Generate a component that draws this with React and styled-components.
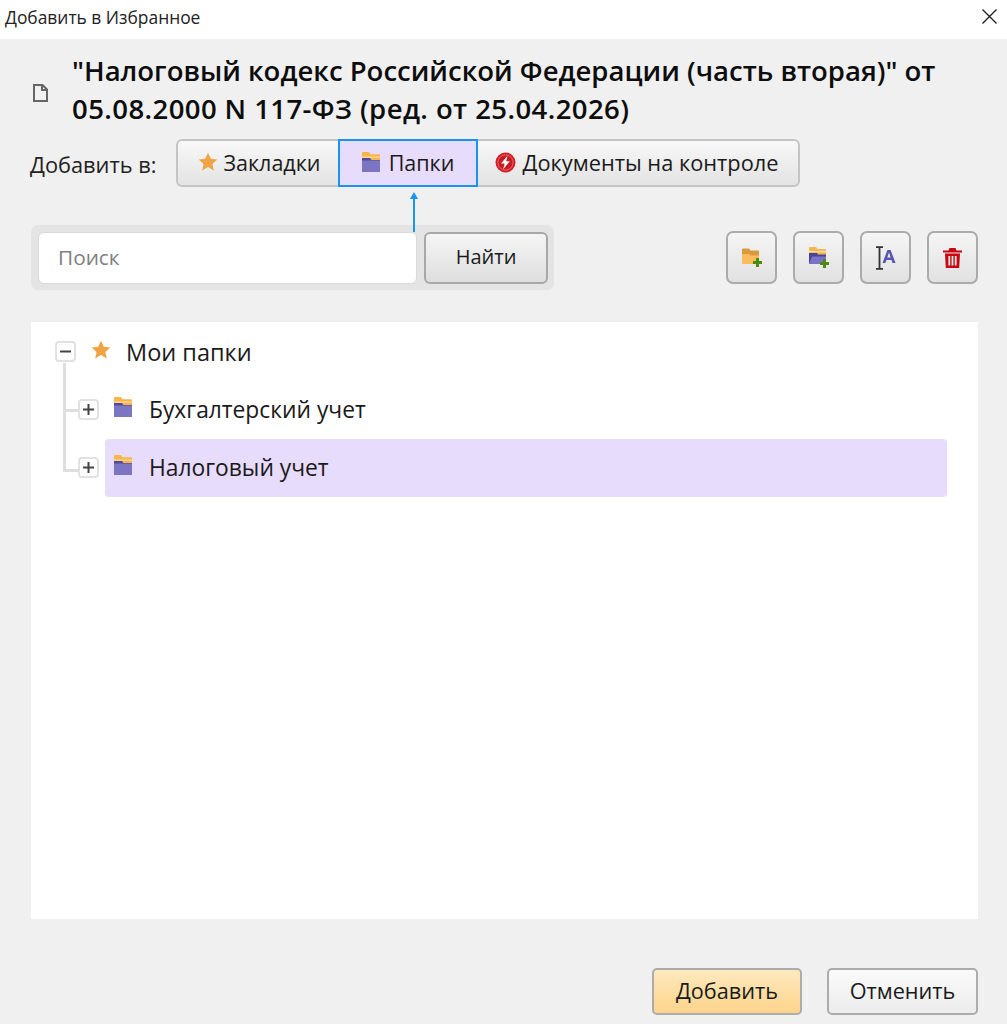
import React from 'react';
import styled, { createGlobalStyle } from 'styled-components';

const Global = createGlobalStyle`
  html, body { margin: 0; padding: 0; background: #f0f0f0; }
  body { font-family: "Open Sans", "Noto Sans", "Liberation Sans", sans-serif; color: #111; }
  * { box-sizing: border-box; }
`;

const Dialog = styled.div`
  width: 1007px; height: 1024px; background: #f0f0f0; display: flex; flex-direction: column; overflow: hidden;
`;
const TitleBar = styled.header`
  height: 39px; flex: none; background: #fff; display: flex; align-items: center; justify-content: space-between;
  padding: 0 10px 6px 5px; font-size: 17.4px; color: #222;
`;
const Close = styled.button`
  border: 0; padding: 0; background: none; width: 15px; height: 15px; display: flex;
`;
const Body = styled.main`
  flex: 1; display: flex; flex-direction: column; padding: 13px 29px 9px 31px; min-height: 0;
`;
const DocHead = styled.div`
  display: flex; align-items: center; gap: 24px; padding-left: 2px;
`;
const DocTitle = styled.h1`
  margin: 0; font-size: 27.5px; line-height: 38px; font-weight: 600; color: #0d0d0d; width: 890px;
`;
const TitleLine = styled.span`
  display: block; white-space: nowrap; letter-spacing: ${p => p.$spacing || 0}px;
`;
const TabRow = styled.div`
  display: flex; align-items: center; gap: 18px; margin-top: 11px; position: relative; height: 48px;
`;
const Label = styled.span`
  font-size: 21.8px; width: 127px; margin-left: -1px; flex: none; color: #222; white-space: nowrap; margin-top: 2px;
`;
const Tabs = styled.div`
  display: flex; height: 48px; margin-left: 1px; border: 2px solid #c4c4c4; border-radius: 6px;
  background: linear-gradient(#f8f8f8, #e3e3e3); overflow: visible;
`;
const Tab = styled.div`
  display: flex; align-items: center; justify-content: center; gap: ${p => p.$gap || 8}px;
  width: ${p => p.$w}px; font-size: ${p => p.$size || 21.5}px; color: #1a1a1a; white-space: nowrap; padding-bottom: 2px;
  ${p => p.$active && `
    background: #e8dcfd; outline: 2px solid #1a94ea; outline-offset: 0; position: relative;
  `}
`;
const Arrow = styled.svg`
  position: absolute; left: 379px; top: 53px; width: 8px; height: 40px; z-index: 2;
`;
const ToolRow = styled.div`
  display: flex; justify-content: space-between; align-items: center; margin-top: 38px; height: 66px;
`;
const SearchGroup = styled.div`
  display: flex; gap: 7px; width: 523px; height: 65px; padding: 7px 6px 6px 7px; background: #e4e4e4; border-radius: 7px;
`;
const SearchInput = styled.input`
  flex: 1; min-width: 0; height: 52px; border: 1px solid #dadada; border-radius: 6px; background: #fff;
  padding: 0 19px 3px; font: inherit; font-size: 20.8px; outline: none;
  &::placeholder { color: #808080; opacity: 1; }
`;
const SearchBtn = styled.button`
  width: 124px; height: 52px; padding: 0 0 3px; border: 2px solid #a8a8a8; border-radius: 6px;
  background: linear-gradient(#f5f5f5, #dedede); font: inherit; font-size: 20px; color: #1a1a1a;
`;
const IconGroup = styled.div`
  display: flex; gap: 16px;
`;
const IconBtn = styled.button`
  width: 51px; height: 53px; padding: 0; border: 2px solid #ababab; border-radius: 7px;
  background: linear-gradient(#f5f5f5, #e1e1e1); display: flex; align-items: center; justify-content: center;
`;
const TreePanel = styled.section`
  margin-top: 31px; height: 598px; background: #fff; padding: 7px 31px 0 24px;
`;
const RootRow = styled.div`
  display: flex; align-items: center; height: 46px; font-size: 23.5px; color: #1a1a1a;
`;
const Toggle = styled.span`
  width: 21px; height: 21px; flex: none; border: 2px solid #e1e1e1; border-radius: 4px; background: #fff;
  display: flex; align-items: center; justify-content: center; position: relative; z-index: 1;
`;
const RootStar = styled.span`
  display: flex; margin: -3px 15px 0 15px;
`;
const Children = styled.div`
  position: relative; padding-left: 23px; margin-top: 6px;
  &::before {
    content: ""; position: absolute; left: 8px; top: -18px; width: 16px; height: 106px;
    border-left: 3px solid #dedede; border-bottom: 3px solid #dedede;
  }
`;
const ChildRow = styled.div`
  position: relative; display: flex; align-items: center; height: 58px;
  &::before {
    content: ""; position: absolute; left: -15px; top: 28px; width: 16px; height: 3px; background: #dedede;
    display: ${p => (p.$last ? 'none' : 'block')};
  }
`;
const ChildLabel = styled.div`
  flex: 1; height: 58px; margin-left: 6px; padding-left: 9px; display: flex; align-items: center; gap: 17px;
  font-size: 22.8px; border-radius: 4px; color: #1a1a1a;
  background: ${p => (p.$selected ? '#e8dcfd' : 'transparent')};
`;
const FolderWrap = styled.span`
  display: flex; margin-top: -5px;
`;
const Footer = styled.footer`
  margin-top: 49px; display: flex; justify-content: flex-end; gap: 25px;
`;
const FootBtn = styled.button`
  width: ${p => p.$w}px; height: 47px; padding: 0 0 2px; border: 2px solid #acacac; border-radius: 5px; font: inherit; font-size: 21.7px; color: #1a1a1a;
  background: ${p => (p.$primary ? 'linear-gradient(#fee9bf, #fdd48b)' : 'linear-gradient(#fafafa, #ececec)')};
`;

const Star = ({ s = 20 }) => (
  <svg width={s} height={s} viewBox="0 0 20 20"><path d="M10 .8l2.8 6 6.5.7-4.9 4.4 1.4 6.5L10 15.1l-5.8 3.3 1.4-6.5L.7 7.5l6.5-.7z" fill="#f0a343" /></svg>
);
const Folder = ({ w = 18, h = 20 }) => (
  <svg width={w} height={h} viewBox="0 0 18 20">
    <path d="M0 1A1 1 0 0 1 1 0h6l1.5 2.2H17a1 1 0 0 1 1 1V9H0z" fill="#f9b54c" />
    <rect y="4.6" width="18" height="1" fill="#fde3ae" />
    <path d="M0 6h8l1.5 2H18v11a1 1 0 0 1-1 1H1a1 1 0 0 1-1-1z" fill="#4f4a9c" />
    <path d="M0 8.4h18V19a1 1 0 0 1-1 1H1a1 1 0 0 1-1-1z" fill="#7b75c2" />
  </svg>
);
const Plus = ({ minus }) => (
  <svg width="11" height="11" viewBox="0 0 11 11">
    <rect x="0" y="4.5" width="11" height="2" fill="#444" />
    {!minus && <rect x="4.5" y="0" width="2" height="11" fill="#444" />}
  </svg>
);
const GreenPlus = () => (
  <path d="M14 10h3v3h3v3h-3v3h-3v-3h-3v-3h3z" fill="#4f8a10" />
);
const CloseIcon = () => (
  <svg width="15" height="15" viewBox="0 0 15 15"><path d="M.5.5l14 14M14.5.5l-14 14" stroke="#222" strokeWidth="1.4" fill="none" /></svg>
);

export default function App() {
  return (
    <Dialog>
      <Global />
      <TitleBar>
        <span>Добавить в Избранное</span>
        <Close aria-label="Закрыть"><CloseIcon /></Close>
      </TitleBar>
      <Body>
        <DocHead>
          <svg width="15" height="18" viewBox="0 0 15 18" style={{ flex: 'none', marginTop: 6 }}>
            <path d="M1 1h8.5L14 5.5V17H1z M9 1v5h5" fill="none" stroke="#666" strokeWidth="2" />
          </svg>
          <DocTitle>
            <TitleLine>"Налоговый кодекс Российской Федерации (часть вторая)" от</TitleLine>
            <TitleLine $spacing={0.42}>05.08.2000 N 117-ФЗ (ред. от 25.04.2026)</TitleLine>
          </DocTitle>
        </DocHead>
        <TabRow>
          <Label>Добавить в:</Label>
          <Tabs>
            <Tab $w={162} $gap={6}><Star />Закладки</Tab>
            <Tab $w={136} $active $gap={9}><Folder />Папки</Tab>
            <Tab $w={322} $gap={6} $size={21.8}>
              <svg width="21" height="21" viewBox="0 0 21 21">
                <circle cx="10.5" cy="10.5" r="10" fill="#d42027" />
                <circle cx="10.5" cy="10.5" r="7.6" fill="#c81c22" stroke="#e87a7d" strokeWidth=".8" />
                <path d="M12.5 3.8L6 11.5h3.6l-1.4 5.7 6.6-7.9h-3.6z" fill="#fff" />
              </svg>
              Документы на контроле
            </Tab>
          </Tabs>
          <Arrow viewBox="0 0 8 40">
            <path d="M4 0L8 7H0z" fill="#1a94ea" />
            <rect x="3" y="6" width="2" height="34" fill="#1a94ea" />
          </Arrow>
        </TabRow>
        <ToolRow>
          <SearchGroup>
            <SearchInput placeholder="Поиск" />
            <SearchBtn>Найти</SearchBtn>
          </SearchGroup>
          <IconGroup>
            <IconBtn aria-label="Новая папка">
              <svg width="20" height="19" viewBox="0 0 20 19">
                <path d="M0 1.5A1 1 0 0 1 1 .5h6l1.5 2H16a1 1 0 0 1 1 1V8H0z" fill="#d99a3f" />
                <path d="M0 6h7l1.5 1.5H17V16H1a1 1 0 0 1-1-1z" fill="#fbbd5c" />
                <GreenPlus />
              </svg>
            </IconBtn>
            <IconBtn aria-label="Новая подпапка">
              <svg width="20" height="21" viewBox="0 0 20 21">
                <path d="M0 1A1 1 0 0 1 1 0h6l1.5 2H16a1 1 0 0 1 1 1v5H0z" fill="#f9b64e" />
                <rect y="4" width="17" height="1.2" fill="#fde3ae" />
                <path d="M0 6h8l1 1.5h8V17H1a1 1 0 0 1-1-1z" fill="#4a4499" />
                <path d="M0 17l3-7.5h14V17z" fill="#7a73c8" />
                <g transform="translate(0 2)"><GreenPlus /></g>
              </svg>
            </IconBtn>
            <IconBtn aria-label="Переименовать">
              <svg width="22" height="24" viewBox="0 0 22 24">
                <path d="M1 1.2h7M1 22.8h7M4.5 1.2v21.6" stroke="#333" strokeWidth="1.8" fill="none" />
                <path d="M7.5 17L12.4 4h3.2L20.5 17h-3l-1-3h-5.1l-1 3zM12.3 11.5h3.4L14 6.6z" fill="#5a55b0" fillRule="evenodd" />
              </svg>
            </IconBtn>
            <IconBtn aria-label="Удалить">
              <svg width="19" height="20" viewBox="0 0 19 20">
                <path d="M6.5 0h6l1 2.4H19v2.2H0V2.4h5.5z" fill="#c8060e" />
                <path fillRule="evenodd" d="M2 5.5h15l-.8 14.5H2.8zM5.4 8v9.5h1.8V8zM8.6 8v9.5h1.8V8zM11.8 8v9.5h1.8V8z" fill="#c8060e" />
              </svg>
            </IconBtn>
          </IconGroup>
        </ToolRow>
        <TreePanel>
          <RootRow>
            <Toggle><Plus minus /></Toggle>
            <RootStar><Star /></RootStar>
            Мои папки
          </RootRow>
          <Children>
            <ChildRow>
              <Toggle><Plus /></Toggle>
              <ChildLabel><FolderWrap><Folder /></FolderWrap>Бухгалтерский учет</ChildLabel>
            </ChildRow>
            <ChildRow $last>
              <Toggle><Plus /></Toggle>
              <ChildLabel $selected><FolderWrap><Folder /></FolderWrap>Налоговый учет</ChildLabel>
            </ChildRow>
          </Children>
        </TreePanel>
        <Footer>
          <FootBtn $w={150} $primary>Добавить</FootBtn>
          <FootBtn $w={151}>Отменить</FootBtn>
        </Footer>
      </Body>
    </Dialog>
  );
}
